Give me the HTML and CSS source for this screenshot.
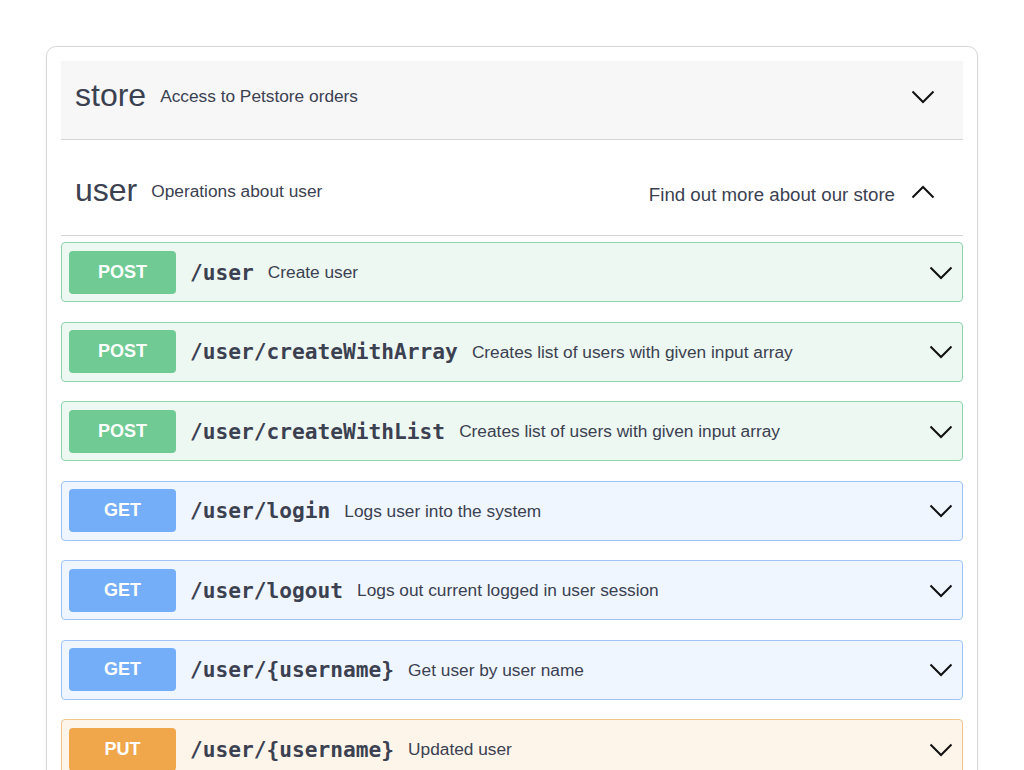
FILE: index.html
```html
<!DOCTYPE html>
<html>
<head>
<meta charset="utf-8">
<link rel="stylesheet" href="styles.css">
</head>
<body>
<div class="card">
  <div class="tag tag-store">
    <div class="tag-left">
      <span class="tag-name">store</span>
      <span class="tag-desc">Access to Petstore orders</span>
    </div>
    <svg class="chev-lg" viewBox="0 0 24 14" width="24" height="14"><path d="M1.5 1.5 L12 12 L22.5 1.5" fill="none" stroke="#111" stroke-width="2"/></svg>
  </div>
  <div class="tag tag-user">
    <div class="tag-left">
      <span class="tag-name">user</span>
      <span class="tag-desc">Operations about user</span>
    </div>
    <div class="tag-right">
      <span class="tag-link">Find out more about our store</span>
      <svg class="chev-lg" viewBox="0 0 24 14" width="24" height="14"><path d="M1.5 12.5 L12 2 L22.5 12.5" fill="none" stroke="#111" stroke-width="2"/></svg>
    </div>
  </div>
  <div class="ops">
    <div class="op op-post"><span class="badge">POST</span><span class="path">/user</span><span class="desc">Create user</span><svg class="chev" viewBox="0 0 24 14" width="24" height="14"><path d="M1.5 1.5 L12 12 L22.5 1.5" fill="none" stroke="#111" stroke-width="2"/></svg></div>
    <div class="op op-post"><span class="badge">POST</span><span class="path">/user/createWithArray</span><span class="desc">Creates list of users with given input array</span><svg class="chev" viewBox="0 0 24 14" width="24" height="14"><path d="M1.5 1.5 L12 12 L22.5 1.5" fill="none" stroke="#111" stroke-width="2"/></svg></div>
    <div class="op op-post"><span class="badge">POST</span><span class="path">/user/createWithList</span><span class="desc">Creates list of users with given input array</span><svg class="chev" viewBox="0 0 24 14" width="24" height="14"><path d="M1.5 1.5 L12 12 L22.5 1.5" fill="none" stroke="#111" stroke-width="2"/></svg></div>
    <div class="op op-get"><span class="badge">GET</span><span class="path">/user/login</span><span class="desc">Logs user into the system</span><svg class="chev" viewBox="0 0 24 14" width="24" height="14"><path d="M1.5 1.5 L12 12 L22.5 1.5" fill="none" stroke="#111" stroke-width="2"/></svg></div>
    <div class="op op-get"><span class="badge">GET</span><span class="path">/user/logout</span><span class="desc">Logs out current logged in user session</span><svg class="chev" viewBox="0 0 24 14" width="24" height="14"><path d="M1.5 1.5 L12 12 L22.5 1.5" fill="none" stroke="#111" stroke-width="2"/></svg></div>
    <div class="op op-get"><span class="badge">GET</span><span class="path">/user/{username}</span><span class="desc">Get user by user name</span><svg class="chev" viewBox="0 0 24 14" width="24" height="14"><path d="M1.5 1.5 L12 12 L22.5 1.5" fill="none" stroke="#111" stroke-width="2"/></svg></div>
    <div class="op op-put"><span class="badge">PUT</span><span class="path">/user/{username}</span><span class="desc">Updated user</span><svg class="chev" viewBox="0 0 24 14" width="24" height="14"><path d="M1.5 1.5 L12 12 L22.5 1.5" fill="none" stroke="#111" stroke-width="2"/></svg></div>
  </div>
</div>
</body>
</html>
```

FILE: styles.css
```css
html, body {
  margin: 0;
  padding: 0;
  background: #ffffff;
  height: 770px;
  overflow: hidden;
}
body {
  font-family: "Liberation Sans", Arial, sans-serif;
  color: #3b4151;
  padding: 46px 46px 0 46px;
}
.card {
  width: 932px;
  border: 1px solid #d6d7da;
  border-radius: 10px;
  box-shadow: 0 1px 3px rgba(0,0,0,0.06);
  padding: 14px 14px 0 14px;
  box-sizing: border-box;
  height: 800px;
}
.tag {
  display: flex;
  align-items: center;
  justify-content: space-between;
  border-bottom: 1px solid #d4d5d8;
  padding: 0 28px 0 14px;
}
.tag-store {
  background: #f7f7f7;
  height: 78px;
}
.tag-user {
  height: 95px;
  margin-bottom: 6px;
}
.tag-left {
  display: flex;
  align-items: center;
  gap: 14px;
}
.tag-name {
  font-size: 32px;
}
.tag-desc {
  font-size: 17.3px;
}
.tag-store .tag-left { margin-top: -7px; }
.tag-store .tag-name { margin-top: -2px; }
.tag-user .tag-left { margin-top: 8px; }
.tag-user .tag-name { margin-top: -2px; }
.tag-right {
  display: flex;
  align-items: center;
  gap: 16px;
  margin-top: 15px;
}
.tag-link {
  font-size: 18.7px;
}
.chev-lg {
  display: block;
  margin-top: -6px;
}
.tag-user .chev-lg { margin-top: -6px; }
.ops {
  display: flex;
  flex-direction: column;
  gap: 19.5px;
}
.op {
  display: flex;
  align-items: center;
  height: 60px;
  box-sizing: border-box;
  border: 1px solid;
  border-radius: 4px;
  padding: 0 9px 0 7px;
}
.badge {
  width: 107px;
  height: 43px;
  border-radius: 4px;
  color: #fff;
  font-weight: bold;
  font-size: 18px;
  display: flex;
  align-items: center;
  justify-content: center;
  flex-shrink: 0;
}
.path {
  font-family: "DejaVu Sans Mono", monospace;
  font-weight: bold;
  font-size: 21.2px;
  margin-left: 14px;
  color: #3b4151;
}
.desc {
  font-size: 17.3px;
  margin-left: 14px;
  flex: 1;
  margin-top: 1px;
}
.chev {
  display: block;
  margin-top: 1px;
}
.op-post { background: #eef8f2; border-color: #8fd6ab; }
.op-post .badge { background: #6fca93; }
.op-get { background: #eff6ff; border-color: #9ec4f8; }
.op-get .badge { background: #74adf8; }
.op-put { background: #fdf5ea; border-color: #f3c58b; }
.op-put .badge { background: #f0a64b; }
```
